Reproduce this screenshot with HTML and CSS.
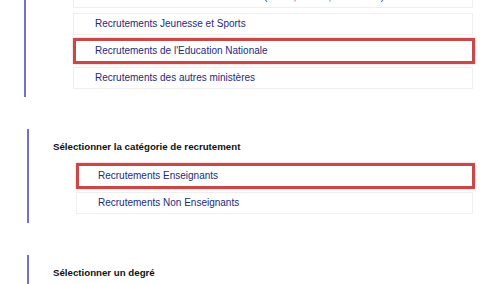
FILE: index.html
```html
<!DOCTYPE html>
<html lang="fr">
<head>
    <meta charset="UTF-8">
    <meta name="viewport" content="width=device-width, initial-scale=1.0">
    <title>Sélection du recrutement</title>
    <link rel="stylesheet" href="styles.css">
</head>
<body>

<!-- Etape : ministère -->
<section class="step step-first">
    <ul class="options">
        <li class="option">Recrutements des ministères sociaux (Santé, Travail, Solidarités)</li>
        <li class="option">Recrutements Jeunesse et Sports</li>
        <li class="option is-selected">Recrutements de l'Education Nationale</li>
        <li class="option">Recrutements des autres ministères</li>
    </ul>
</section>

<!-- Etape : catégorie -->
<section class="step">
    <h2 class="step-title">Sélectionner la catégorie de recrutement</h2>
    <ul class="options">
        <li class="option is-selected">Recrutements Enseignants</li>
        <li class="option">Recrutements Non Enseignants</li>
    </ul>
</section>

<!-- Etape : degré -->
<section class="step">
    <h2 class="step-title">Sélectionner un degré</h2>
</section>

</body>
</html>
```

FILE: styles.css
```css
* { margin: 0; padding: 0; box-sizing: border-box; }
body { background: #fff; color: #111; font-family: "Liberation Sans", Arial, sans-serif; overflow: hidden; }

.step { border-left: 2px solid #7272cc; margin: 32px 27px 0 27px; padding: 12px 0 9px 24px; }
.step-first { margin-top: -14px; margin-left: 24px; padding-top: 0; padding-bottom: 8px; }
.step-first .options { margin-left: 23px; margin-top: 0; }

.step-title { font-size: 9.7px; font-weight: bold; line-height: 12px; color: #111; }

.options { list-style: none; display: flex; flex-direction: column; gap: 5px; margin: 12px 0 0 23px; }
.option { height: 22px; line-height: 20px; padding-left: 21px; border: 1px solid #efefef; background: #fff; font-size: 10px; color: #1e2a7c; white-space: nowrap; overflow: hidden; }
.option.is-selected { height: 26px; line-height: 20px; padding-left: 19px; margin: -2px -2px -2px 0; border: 3px solid #c94747; box-shadow: 0 0 2px rgba(214, 80, 80, 0.45); }
```
